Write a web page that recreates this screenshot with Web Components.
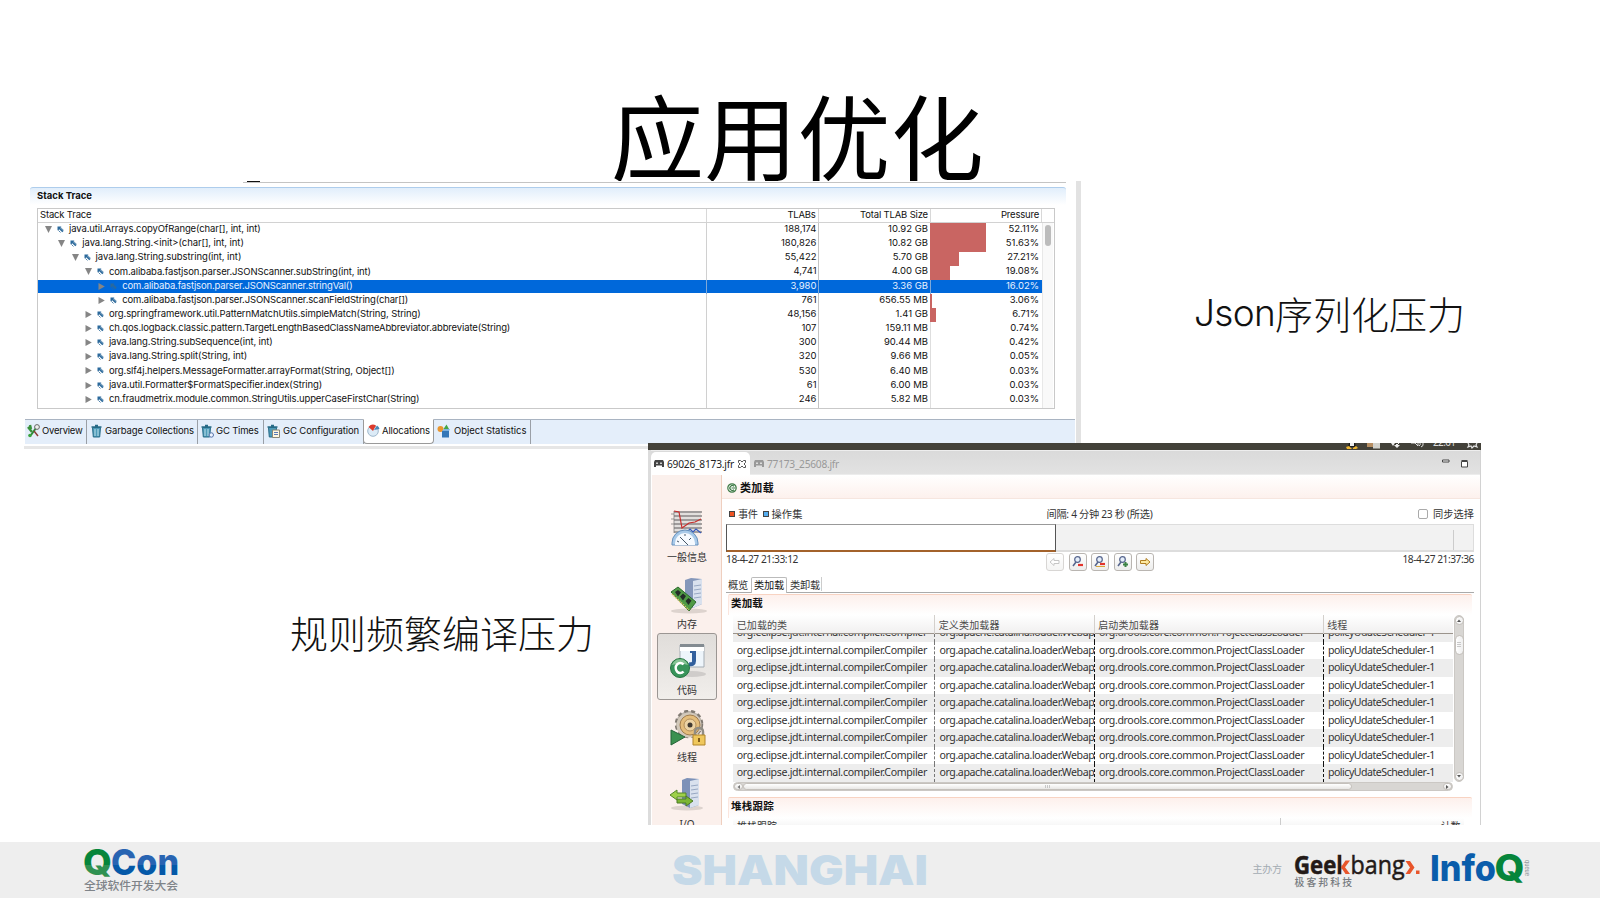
<!DOCTYPE html>
<html lang="zh-CN">
<head>
<meta charset="utf-8">
<title>应用优化</title>
<style>
html,body{margin:0;padding:0;background:#fff}
body{width:1600px;height:900px;overflow:hidden;font-family:"Noto Sans","Noto Sans CJK SC",sans-serif}
</style>
</head>
<body>
<talk-slide></talk-slide>
<script>
const define = (name, html, setup) => {
  const t = document.createElement('template');
  t.innerHTML = html;
  customElements.define(name, class extends HTMLElement {
    constructor() {
      super();
      this.attachShadow({mode: 'open'}).append(t.content.cloneNode(true));
    }
    connectedCallback() { if (setup && !this.ready) { this.ready = true; setup(this, this.shadowRoot); } }
  });
};

/* Text run tracked out or in so that it fills the width given in "w". */
define('fit-text', `<style>
:host{display:inline-block;white-space:pre;flex:none}
span{display:inline-block;white-space:pre}
</style><span><slot></slot></span>`, (el, root) => {
  const w = parseFloat(el.getAttribute('w'));
  const span = root.querySelector('span');
  el.style.width = w + 'px';
  const n = [...el.textContent].length;
  const natural = span.getBoundingClientRect().width;
  if (natural) span.style.letterSpacing = ((w - natural) / n) + 'px';
});

/* ---------- allocation view ---------- */
define('frame-row', `<style>
:host{display:grid;grid-template-columns:669px 111.5px 112.5px 111px;height:14.17px;line-height:12.6px;color:#111}
:host([selected]){color:#e8f1ff}
.tree{display:flex;align-items:center;box-sizing:border-box;padding-bottom:1.4px}
.num{text-align:right;padding-right:2px}
.p{position:relative}
.bar{position:absolute;left:-1px;top:0;bottom:-.4px;background:#c96562}
.p span{position:relative}
.p{padding-right:3px}
:host([selected]) div{background:linear-gradient(#0068da,#0068da) 0 0/100% 13px no-repeat}
:host([selected]) .num{border-left:1px solid #7fa9d8;margin-left:-1px}
svg{flex:none;display:block}
</style>
<div class="tree"><svg id="tw" width="9" height="9" viewBox="0 0 9 9"><path fill="#858585"/></svg>
<svg id="ic" width="7" height="7" viewBox="0 0 7 7" style="margin-left:4px"><path d="M.5.5h3.700v1.200H3l3.500 3.300-1.200 1.300L1.900 3v1.300H.5z" fill="#2b699b"/><path d="M4.200 2.300 6.600 4.200M1.500 4.500l2 2" stroke="#2b699b" stroke-width=".8"/></svg><fit-text id="name"></fit-text></div>
<div class="num" id="a"></div><div class="num" id="b" style="padding-right:3px"></div><div class="num p"><i class="bar"></i><span id="c"></span></div>`, (el, root) => {
  const $ = s => root.querySelector(s), g = k => el.getAttribute(k);
  const depth = +g('depth');
  $('.tree').style.paddingLeft = (6 + depth * 13.3) + 'px';
  $('#tw path').setAttribute('d', g('open') !== null ? 'M1 1h7L4.5 8z' : 'M1.500 1v7L7.800 4.500z');
  $('#name').style.marginLeft = '5px';
  $('#a').textContent = g('tlabs'); $('#b').textContent = g('size');
  $('#c').textContent = g('pressure');
  $('.bar').style.width = g('bar') + 'px';
});

define('alloc-view', `<style>
:host{display:block;width:1057px;height:268px;background:#fff;box-sizing:border-box;border-right:5px solid #e2e2e2;border-bottom:3px solid #e6e6e6;font:9.5px Inter,sans-serif;color:#111}
.prev{height:6px;margin-left:219px;width:823px;box-sizing:border-box;background:linear-gradient(#c4c4c4,#c4c4c4) 0 1px/100% 1px no-repeat}
.prev i{display:block;width:13px;height:1.4px;background:#111;margin-left:4px}
.head{margin-left:6px;width:1036px;height:21px;box-sizing:border-box;border-top:1px solid #aecdec;border-radius:3px 3px 0 0;background:linear-gradient(#e1eefb,#fff 85%);padding:0 0 0 7px;line-height:16px;font-weight:700}
.table{margin-left:13px;width:1018px;height:201px;box-sizing:border-box;border:1px solid #c9c9c9;position:relative}
.cols{display:grid;grid-template-columns:669px 111.5px 112.5px 111px 11px;height:13px;line-height:11.5px;border-bottom:1px solid #d2d2d2}
.cols div{box-sizing:border-box;padding:0 2px;text-align:right;border-right:1px solid #d8d8d8}
.cols div:first-child{text-align:left}.cols div:last-child{border:0}
.body{display:grid;grid-template-columns:1004px 11px;height:185px;background:linear-gradient(#d0d0d0,#d0d0d0) 668px 0/1px 100% no-repeat,linear-gradient(#c4c4c4,#c4c4c4) 779.5px 0/1px 100% no-repeat,linear-gradient(#dedede,#dedede) 892px 0/1px 100% no-repeat}
.sb{background:#f9f9f9;border-left:1px solid #e8e8e8;padding:2px 1.5px}
.sb i{display:block;width:6.5px;height:21px;border-radius:4px;background:#bcbcbc}
.tabs{margin:10px 0 0 1px;height:25px;width:1050px;background:#e4eefa;border-top:1px solid #a9b4c2;box-sizing:border-box;display:flex;line-height:20px}
.tab{box-sizing:border-box;border-right:1px solid #9a9fa6;height:24px;display:flex;align-items:center;padding-left:3px}
.tab fit-text{margin-top:-2px}
.tab svg{width:13px;height:14px;flex:none;margin-right:2px;margin-top:-3px}
.on{background:#fff;border:1px solid #9a9a9a;border-top-color:#fff;border-radius:0 0 4px 4px;margin-left:-1px;margin-top:-1px;height:25px}
</style>
<div class="prev"><i></i></div>
<div class="head"><fit-text w="55">Stack Trace</fit-text></div>
<div class="table"><div class="cols"><div><fit-text w="51.5">Stack Trace</fit-text></div><div><fit-text w="28">TLABs</fit-text></div><div><fit-text w="68">Total TLAB Size</fit-text></div><div><fit-text w="38">Pressure</fit-text></div><div></div></div>
<div class="body"><div id="rows"></div><div class="sb"><i></i></div></div></div>
<div class="tabs">
<div class="tab" style="width:62px;padding-left:2px"><svg viewBox="0 0 13 14"><path d="M1 3 5 8M3 1l1 4" stroke="#39913c" stroke-width="2.4"/><path d="M4 11 9 4" stroke="#2f8b39" stroke-width="2"/><circle cx="10" cy="3" r="2.4" fill="#eee" stroke="#666"/><path d="m7 7 4 5" stroke="#8b3d37" stroke-width="1.5"/><circle cx="3" cy="11.5" r="1.8" fill="#3aa43f"/></svg><fit-text w="40.5">Overview</fit-text></div>
<div class="tab" style="width:111px"><svg viewBox="0 0 13 14"><path d="M2.5 3.5h8l-.8 9.5H3.3z" fill="#4d9ab8" stroke="#276b87"/><path d="M1.5 3h10M5 1.5h3" stroke="#276b87" stroke-width="1.6"/><path d="M5 5v7M8 5v7" stroke="#bfe2ec"/></svg><fit-text w="89">Garbage Collections</fit-text></div>
<div class="tab" style="width:66px"><svg viewBox="0 0 13 14"><path d="M1.5 3.5h8l-.8 9.5H2.3z" fill="#4d9ab8" stroke="#276b87"/><path d="M.5 3h10M4 1.5h3" stroke="#276b87" stroke-width="1.6"/><path d="M4 5v7M7 5v7" stroke="#bfe2ec"/><circle cx="10.3" cy="11" r="2.2" fill="#eef5ff" stroke="#5572a8"/></svg><fit-text w="42.5">GC Times</fit-text></div>
<div class="tab" style="width:100px"><svg viewBox="0 0 13 14" style="margin-right:3px"><path d="M1.5 3.5h8l-.8 9.5H2.3z" fill="#4d9ab8" stroke="#276b87"/><path d="M.5 3h10M4 1.5h3" stroke="#276b87" stroke-width="1.6"/><path d="M5.500 6h7v7.500h-7z" fill="#fff7df" stroke="#8a8777"/><path d="M7 8.500h4M7 10.500h4" stroke="#5a79b5"/></svg><fit-text w="76">GC Configuration</fit-text></div>
<div class="tab on" style="width:71px"><svg viewBox="0 0 13 14" style="margin-right:2px"><circle cx="6" cy="8" r="5.300" fill="#dcebf7" stroke="#9fb8cc"/><path d="M6 8 1.500 4A6 6 0 0 1 9 2.500z" fill="#dc3a2c"/><path d="m7 7 3-4.500A5 5 0 0 1 12.500 6z" fill="#4a87b5"/></svg><fit-text w="48">Allocations</fit-text></div>
<div class="tab" style="width:97px"><svg viewBox="0 0 13 14" style="margin-right:4px"><circle cx="3.500" cy="5" r="3" fill="#e9962f"/><path d="M5 7h7v6.500H5z" fill="#3477b8"/><path d="M5 7l2-2h6l-1 2z" fill="#7fb2df"/><path d="m6.500 5 3-4.500L12 5z" fill="#44a546"/></svg><fit-text w="72.500">Object Statistics</fit-text></div>
</div>`, (el, root) => {
  const data = [
    [0,1,'java.util.Arrays.copyOfRange(char[], int, int)',191.5,'188,174','10.92 GB','52.11%',56],
    [1,1,'java.lang.String.<init>(char[], int, int)',161.5,'180,826','10.82 GB','51.63%',56],
    [2,1,'java.lang.String.substring(int, int)',145.7,'55,422','5.70 GB','27.21%',29],
    [3,1,'com.alibaba.fastjson.parser.JSONScanner.subString(int, int)',262,'4,741','4.00 GB','19.08%',20],
    [4,0,'com.alibaba.fastjson.parser.JSONScanner.stringVal()',230.3,'3,980','3.36 GB','16.02%',0],
    [4,0,'com.alibaba.fastjson.parser.JSONScanner.scanFieldString(char[])',286,'761','656.55 MB','3.06%',2],
    [3,0,'org.springframework.util.PatternMatchUtils.simpleMatch(String, String)',311.7,'48,156','1.41 GB','6.71%',6],
    [3,0,'ch.qos.logback.classic.pattern.TargetLengthBasedClassNameAbbreviator.abbreviate(String)',401.3,'107','159.11 MB','0.74%',0],
    [3,0,'java.lang.String.subSequence(int, int)',163.7,'300','90.44 MB','0.42%',0],
    [3,0,'java.lang.String.split(String, int)',138.3,'320','9.66 MB','0.05%',0],
    [3,0,'org.slf4j.helpers.MessageFormatter.arrayFormat(String, Object[])',285.7,'530','6.40 MB','0.03%',0],
    [3,0,'java.util.Formatter$FormatSpecifier.index(String)',213.3,'61','6.00 MB','0.03%',0],
    [3,0,'cn.fraudmetrix.module.common.StringUtils.upperCaseFirstChar(String)',310.5,'246','5.82 MB','0.03%',0]];
  const host = root.querySelector('#rows');
  data.forEach((d, i) => {
    const r = document.createElement('frame-row');
    r.setAttribute('depth', d[0]); if (d[1]) r.setAttribute('open', '');
    if (i === 4) r.setAttribute('selected', '');
    ['tlabs','size','pressure','bar'].forEach((k, j) => r.setAttribute(k, d[4 + j]));
    const n = r.shadowRoot.querySelector('#name');
    n.textContent = d[2]; n.setAttribute('w', d[3]);
    host.append(r);
  });
});

/* ---------- flight recorder window ---------- */
define('nav-item', `<style>
:host{display:flex;flex-direction:column;align-items:center;box-sizing:border-box;width:60px;height:66.7px;margin-left:5px;padding-top:9px;font-size:10px;line-height:12px;color:#333;border:1px solid transparent;border-radius:3px;flex:none}
:host([on]){border-color:#9b9693;background:linear-gradient(#e0ddda,#f1eeeb)}
::slotted(svg){display:block;width:40px;height:38px}
.l{margin-top:3px}
</style><slot name="icon"></slot><div class="l"><slot></slot></div>`);

define('tool-button', `<style>
:host{display:block;width:18px;height:18px;box-sizing:border-box;border:1px solid #b9b5b1;border-radius:3px;background:linear-gradient(#fff,#ededec)}
:host([off]){opacity:.55}
::slotted(svg){display:block;width:16px;height:16px}
</style><slot></slot>`);

define('class-table', `<style>
:host{display:grid;grid-template-columns:720px 11px;grid-template-rows:167px 10px;margin-left:7px;column-gap:1px;font-size:10.6px;color:#333}
.main{overflow:hidden;position:relative}
.r{display:grid;grid-template-columns:202px 159.5px 229px 129.5px;height:17.57px;line-height:17px}
.r>div{box-sizing:border-box;padding-left:3.7px;overflow:hidden;white-space:pre;border-right:1px dashed #777}
.r>div:nth-child(2),.r>div:nth-child(3){border-right-color:#111}
.r>div:nth-child(n+2){padding-left:4.4px}
.r>div:last-child{border:0}
.r:nth-child(odd){background:#ededed}
.h{display:grid;grid-template-columns:202px 159.5px 229px 129.5px;height:18px;line-height:20px;font-size:10px;background:linear-gradient(#fff,#f1f0f0);border-bottom:1px solid #9b948c;color:#4a4a4a}
.h>div{box-sizing:border-box;padding-left:3.7px;border-right:1px solid #d4d0cc}.h>div:last-child{border:0}
.clip{height:148px;overflow:hidden;display:flex;flex-direction:column;justify-content:flex-end}
.clip .r{flex:none}
.v{display:flex;flex-direction:column;background:#d8d6d3;border:1px solid #cbc8c4;border-radius:5px;box-sizing:border-box;width:10px;align-items:center}
.v i,.hs i{background:linear-gradient(90deg,#fff,#eee);border:1px solid #c4c0bb;box-sizing:border-box;border-radius:5px;display:flex;align-items:center;justify-content:center}
.hs{display:flex;border-radius:5px;background:#d8d6d3;border:1px solid #cbc8c4;box-sizing:border-box;height:9px}
.hs i{background:linear-gradient(#fff,#e8e7e5);height:7px}
svg{display:block}
</style>
<div class="main"><div class="h"><div><fit-text w="50.5">已加载的类</fit-text></div><div><fit-text w="61">定义类加载器</fit-text></div><div><fit-text w="61">启动类加载器</fit-text></div><div><fit-text w="20">线程</fit-text></div></div><div class="clip"></div></div>
<div class="v"><i style="width:9px;height:9px"><svg width="4" height="3"><path d="M0 3 2 .5 4 3z" fill="#555"/></svg></i><i style="width:9px;height:20px;margin-top:10px"><svg width="4" height="6"><path d="M0 .5h4M0 2.500h4M0 4.500h4" stroke="#bbb" stroke-width=".8"/></svg></i><i style="width:9px;height:9px;margin-top:auto"><svg width="4" height="3"><path d="M0 0h4L2 2.500z" fill="#555"/></svg></i></div>
<div class="hs"><i style="width:9px"><svg width="3" height="4"><path d="M3 0v4L.5 2z" fill="#777"/></svg></i><i style="width:609px"><svg width="6" height="3"><path d="M.5 0v3M2.500 0v3M4.500 0v3" stroke="#bbb" stroke-width=".8"/></svg></i><i style="width:9px;margin-left:auto"><svg width="3" height="4"><path d="M0 0v4L2.500 2z" fill="#555"/></svg></i></div>`, (el, root) => {
  const c = root.querySelector('.clip');
  const row = '<div><fit-text w="190.3">org.eclipse.jdt.internal.compiler.Compiler</fit-text></div><div><fit-text w="155">org.apache.catalina.loader.Webap</fit-text></div><div><fit-text w="205.3">org.drools.core.common.ProjectClassLoader</fit-text></div><div><fit-text w="107">policyUdateScheduler-1</fit-text></div>';
  c.innerHTML = Array(9).fill('<div class="r">' + row + '</div>').join('');
});

define('recorder-window', `<style>
:host{display:block;width:833px;height:382px;overflow:hidden;background:#fff;color:#333;font:10.2px "Noto Sans","Noto Sans CJK SC",sans-serif}
svg{display:block;flex:none}
.top{height:7px;background:#434139;display:flex;justify-content:flex-end;overflow:hidden;color:#ddd}
.win{height:375px;border-left:3px solid #dcdcdc;border-right:1px solid #d2d2d2;box-sizing:border-box}
.tabs{height:25px;box-sizing:border-box;padding-top:1px;background:linear-gradient(#dadada,#e2e2e2);border-top:1px solid #eee;border-bottom:1px solid #ececec;display:flex;line-height:24px}
.t1{width:99px;height:25px;background:#fff;border-radius:5px 5px 0 0;display:flex;align-items:center;color:#222}
.t1>*{position:relative;top:-1px}
.t2{color:#999;display:flex;align-items:center;margin-left:4px;padding-top:1px}
.main{display:grid;grid-template-columns:70px 1fr;height:350px}
.nav{background:#fbf0ec;border-right:1px solid #efcfbf;box-sizing:border-box;overflow:hidden;padding-top:25px;margin-left:1px;width:70px}
.head{height:24px;border-bottom:1px solid #f6e6df;background:linear-gradient(#fff,#fdf1ed);display:flex;align-items:center;padding-left:6px;font-weight:700;color:#111;box-sizing:border-box;margin-left:1px}
.page{padding:0 6px 0 5px}
.legend{display:flex;align-items:center;height:21px;margin-top:4px;line-height:20px;width:748px}
.sq{width:6px;height:6px;box-sizing:border-box;border:1px solid #444}
.range{box-sizing:border-box;height:28px;background:#f2f2f2;border:1px solid #ddd;border-bottom-width:2px;width:748px;display:flex}
.sel{width:330px;height:28px;margin:-1px 0 0 -1px;box-sizing:border-box;background:#fff;border:1px solid #555;border-top-color:#999;border-bottom:2px solid #a3622b}
.mk{margin:5px 19px 0 auto;width:1px;background:#ccc}
.times{display:flex;justify-content:space-between;width:748px;height:25px;line-height:15px}
.btns{display:flex;gap:4.400px;padding-top:1px}
.sub{display:flex;width:748px;height:16px;border-bottom:1px solid #aaa;line-height:16px;margin-top:0;box-sizing:border-box}
.sec{margin:1px 0 0 2px;width:744px;border-top:1px solid #f8d3c2;border-left:1px solid #fbe6de;box-sizing:border-box;border-radius:2px 2px 0 0;background:linear-gradient(#fdf0ec,#fff);height:21px;font-weight:700;color:#111;padding-left:2px;line-height:17px}
.h2{margin-left:7px;width:731px;display:flex;height:9px;background:linear-gradient(#fff,#f5f5f5);font-size:10px;line-height:17px;box-sizing:border-box;overflow:hidden}
.cb{width:10px;height:10px;box-sizing:border-box;border:1px solid #aaa;border-radius:2px;margin-left:auto;margin-right:5px}
</style>
<div class="top"><svg width="135" height="7" viewBox="0 0 135 7"><path d="M3 0h6l1 4H2z" fill="#1c1c1c"/><path d="M4 0h4v3H4z" fill="#eee"/><path d="m0 4 3-1 3 3H1zM7 5l3-2 2 2-2 1H7z" fill="#efb62f"/><path d="M21 0h8v4h-8z" fill="#b58d62"/><path d="M27 0h7v5.500h-7z" fill="#d2d2cd"/><path d="M45 0h4l-2 3zM50 1h3v-1h-1v2h2l-3 3-3-3h2z" fill="#eee"/><path d="M65 0h4l3 3V0M74 0q1 2-1 3M77 0q1 3-2 4" stroke="#ddd" fill="none"/><path d="M122 0l1 2-1 2 3-1 1 2 2-2 3 1-1-2 1-2" stroke="#e5e5e5" stroke-width="1.200" fill="none"/><text x="87" y="2.500" font-size="10" textLength="23" fill="#ddd">22:01</text></svg></div>
<div class="win">
<div class="tabs"><div class="t1"><svg width="10" height="7" viewBox="0 0 10 7" style="margin:0 3px 0 3px"><path d="M0 7V2l1-2h8l1 2v5H8V5.500H2V7z" fill="#444"/><path d="M2 2.500h2v1.500H2zM6 2.500h2v1.500H6z" fill="#ccc"/></svg><fit-text w="67">69026_8173.jfr</fit-text><svg width="8" height="8" viewBox="0 0 8 8" style="margin-left:4px"><path d="M.500.500h2L4 2 5.500.500h2v2L6 4l1.500 1.500v2h-2L4 6 2.500 7.500h-2v-2L2 4 .500 2.500z" fill="#fff" stroke="#555"/></svg></div>
<div class="t2"><svg width="10" height="7" viewBox="0 0 10 7" style="margin-right:3px"><path d="M0 7V2l1-2h8l1 2v5H8V5.500H2V7z" fill="#999"/><path d="M2 2.500h2v1.500H2zM6 2.500h2v1.500H6z" fill="#ddd"/></svg><fit-text w="72">77173_25608.jfr</fit-text></div>
<svg width="27" height="9" viewBox="0 0 27 9" style="margin:7px 11px 0 auto"><path d="M.500 1h6.500v2H.500zM19.500 2.500h6v5.500h-6zM19.500 1.500h6" fill="#fff" stroke="#444"/></svg></div>
<div class="main"><div class="nav">
<nav-item><svg slot="icon" viewBox="0 0 40 38"><path d="M7 1h27v20H7z" fill="#e2dfdd"/><path d="M7 2h28M7 6h28M7 10h28M7 14h28M7 18h28M7 22h28" stroke="#8b8786" stroke-width="1.400"/><path d="M7 1v22M4 4h3M4 9h3M4 14h3" stroke="#777" stroke-width=".7"/><path d="m7 1 5 1 3 16 7-5 6-1 6-3" fill="none" stroke="#c82c2a" stroke-width="1.200"/><path d="m18 24 5-5 3 3 3-3 5 4" fill="none" stroke="#3558bd" stroke-width="1.200"/><path d="M5 33a13 13 0 0 1 26 0v2H5z" fill="#a9cae9" stroke="#6691bd"/><path d="M8 33a10 10 0 0 1 20 0v2H8z" fill="#f6faff"/><path d="m13 27 8 8M18 24v2M10 31l2 1M24 28l-2 2" stroke="#456"/></svg>一般信息</nav-item>
<nav-item><svg slot="icon" viewBox="0 0 40 38"><ellipse cx="22" cy="34" rx="18" ry="2.500" fill="#ddd3ce"/><path d="m18 3 6-2 11 1v25l-9 4-8-5z" fill="#8597ba"/><path d="m26 4 9-2v25l-9 4z" fill="#d9e1ee"/><path d="M27 9l7-1M27 13l7-1M27 17l7-1M27 21l7-1" stroke="#98a8c3"/><path d="m4 15 7-5 18 15-7 9z" fill="#4f9a45" stroke="#2c6a2d"/><path d="m8 15 3-2 3 2.500-3 4zM13 19.500l3-3 3 2.500-3 4.500zM18.500 24l3-3 3 2.500-3 4.500z" fill="#242c28"/><path d="m5 17 17 16" stroke="#d3c763" stroke-width="1.500" stroke-dasharray="1.500 1"/></svg>内存</nav-item>
<nav-item on><svg slot="icon" viewBox="0 0 40 38"><ellipse cx="25" cy="31" rx="14" ry="3" fill="#cfccca"/><path d="M13 2h24v22H13z" fill="#eef5fb" stroke="#a5adb5"/><path d="M13 1h24v3H13z" fill="#838b91"/><path d="M13 4h24v4H13z" fill="#fff"/><path d="M27 9v9q0 4-5 3" fill="none" stroke="#315f9d" stroke-width="4"/><path d="M23 9h6" stroke="#315f9d" stroke-width="2"/><circle cx="13" cy="25" r="9.500" fill="#38945a" stroke="#267541"/><path d="M5 22a8.500 8.500 0 0 1 16 0q-8-3-16 0" fill="#86c394"/><path d="M16.500 21.500a4.500 5 0 1 0 0 7" fill="none" stroke="#fff" stroke-width="2.600"/></svg>代码</nav-item>
<nav-item><svg slot="icon" viewBox="0 0 40 38"><circle cx="22" cy="14" r="13" fill="#bcb5ac" stroke="#827b73" stroke-width="2.500" stroke-dasharray="4 3"/><circle cx="22" cy="15" r="12.500" fill="#d2c8ba"/><circle cx="23" cy="15" r="10" fill="#e4bd7c" stroke="#a17d4c"/><circle cx="23" cy="15" r="6" fill="#ecd3a5" stroke="#b4905c"/><circle cx="23" cy="15" r="2.500" fill="#413a32"/><path d="m4 20 14 7-14 8z" fill="#3b9150" stroke="#246338"/><path d="M28 26v-4q0-4 4-4t4 4v4" fill="none" stroke="#918d84" stroke-width="2.500"/><path d="M26 25h12v10H26z" fill="#efc75c" stroke="#b1852b"/><path d="M32 28v4" stroke="#815d1c" stroke-width="2"/></svg>线程</nav-item>
<nav-item><svg slot="icon" viewBox="0 0 40 38"><ellipse cx="20" cy="31" rx="16" ry="2.500" fill="#ddd3ce"/><path d="m15 3 5-2 12 1v26l-9 3-8-4z" fill="#7d91b8"/><path d="m23 4 9-2v26l-9 3z" fill="#d9e1ee"/><path d="M24 9l7-1M24 13l7-1M24 17l7-1M24 21l7-1" stroke="#98a8c3"/><path d="m3 18 7-5v3h9v4h-9v3z" fill="#9ed048" stroke="#55852a"/><path d="m26 24-7-5v3h-9v4h9v3z" fill="#7bb632" stroke="#4c7a26"/></svg>I/O</nav-item>
</div>
<div><div class="head"><svg width="10" height="10" viewBox="0 0 10 10" style="margin:3px 3px 0 -1px"><circle cx="5" cy="5" r="4.200" fill="#fff" stroke="#3d7a45" stroke-width="1.200"/><path d="M7 3.300a2.400 2.400 0 1 0 0 3.400M4.500 5h4" stroke="#3d7a45" fill="none" stroke-width="1.200"/></svg><fit-text w="34" style="font-size:11px">类加载</fit-text></div>
<div class="page">
<div class="legend"><i class="sq" style="background:#ef5423;margin-left:3px"></i><fit-text w="19.500" style="margin-left:3px">事件</fit-text><i class="sq" style="background:#55aef0;margin-left:5px"></i><fit-text w="31" style="margin-left:3px">操作集</fit-text><fit-text w="106" style="margin-left:244px">间隔: 4 分钟 23 秒 (所选)</fit-text><i class="cb"></i><fit-text w="41">同步选择</fit-text></div>
<div class="range"><div class="sel"></div><div class="mk"></div></div>
<div class="times"><fit-text w="72">18-4-27 21:33:12</fit-text><div class="btns">
<tool-button off><svg viewBox="0 0 16 16"><path d="m3 8 4-3.500v2h5v3H7v2z" fill="#fff" stroke="#999"/></svg></tool-button>
<tool-button><svg viewBox="0 0 16 16"><circle cx="7.500" cy="5.500" r="2.800" fill="#e5eefa" stroke="#56658d" stroke-width="1.200"/><path d="M6 8 3 12" stroke="#56658d" stroke-width="1.600"/><path d="M8 11h5" stroke="#e3342c" stroke-width="2.200"/></svg></tool-button>
<tool-button><svg viewBox="0 0 16 16"><circle cx="7.500" cy="5.500" r="2.800" fill="#e5eefa" stroke="#56658d" stroke-width="1.200"/><path d="M6 8 3 12" stroke="#56658d" stroke-width="1.600"/><path d="M8 10h5" stroke="#e3342c" stroke-width="2.200"/><path d="M4 12.500h9" stroke="#d6a53b"/></svg></tool-button>
<tool-button><svg viewBox="0 0 16 16"><circle cx="7.500" cy="5.500" r="2.800" fill="#e5eefa" stroke="#56658d" stroke-width="1.200"/><path d="M6 8 3 12" stroke="#56658d" stroke-width="1.600"/><path d="M8 10.500h5M10.500 8v5" stroke="#3c8245" stroke-width="2"/></svg></tool-button>
<tool-button><svg viewBox="0 0 16 16"><path d="m13 8-4-3.500v2H3.500v3H9v2z" fill="#fde9a0" stroke="#b07e22"/></svg></tool-button>
</div><fit-text w="71.500">18-4-27 21:37:36</fit-text></div>
<div class="sub"><fit-text w="20" style="margin:0 3px 0 2px">概览</fit-text><div style="border:1px solid #bbb;border-bottom:0;border-radius:2px 2px 0 0;padding:0 2px;height:15px;line-height:15px;background:#fff;color:#111"><fit-text w="30">类加载</fit-text></div><div style="border-right:1px solid #ccc;padding:0 1px 0 3px;height:14px"><fit-text w="30">类卸载</fit-text></div></div>
<div class="sec"><fit-text w="32" style="font-size:10.500px">类加载</fit-text></div>
<class-table></class-table>
<div class="sec" style="margin-top:5px"><fit-text w="43" style="font-size:10.500px">堆栈跟踪</fit-text></div>
<div class="h2"><fit-text w="40" style="margin-left:4px">堆栈跟踪</fit-text><div style="border-left:1px solid #ccc;margin-left:503px"></div><fit-text w="19" style="margin-left:160px">计数</fit-text></div>
</div></div></div></div>`);

/* ---------- sponsor strip ---------- */
define('slide-footer', `<style>
:host{display:flex;height:56px;background:#eee;width:1600px}
svg{display:block}
text{font-family:Inter,"Noto Sans CJK SC",sans-serif}
.gb text{font-family:"Open Sans",sans-serif}
</style>
<svg width="1600" height="56" viewBox="0 0 1600 56">
<defs><linearGradient id="g" x2="0" y2="1"><stop offset=".55" stop-color="#06853b"/><stop offset=".55" stop-color="#2f9151"/></linearGradient>
<linearGradient id="b" x2="0" y2="1"><stop offset=".55" stop-color="#2864b2"/><stop offset=".55" stop-color="#0559a8"/></linearGradient></defs>
<text x="83" y="33" font-size="35.500" font-weight="800" fill="url(#g)" textLength="29" lengthAdjust="spacingAndGlyphs">Q</text>
<text x="111" y="33" font-size="35.500" font-weight="800" fill="url(#b)" textLength="68" lengthAdjust="spacingAndGlyphs">Con</text>
<text x="84" y="48" font-size="11.800" font-weight="500" fill="#7f8489" textLength="94">全球软件开发大会</text>
<text x="672" y="42.500" font-size="41" font-weight="900" fill="#c5d9e8" textLength="256" lengthAdjust="spacingAndGlyphs">SHANGHAI</text>
<text x="1252.500" y="31" font-size="10" fill="#a3abb2" textLength="29.500">主办方</text>
<g class="gb"><text x="1294" y="31.500" font-size="24.500" font-weight="700" fill="#231a18" stroke="#231a18" stroke-width=".5" textLength="56" lengthAdjust="spacingAndGlyphs">Geek</text>
<path d="M1341.500 10h11v24h-11z" fill="#eee"/>
<text x="1350.500" y="31.500" font-size="25" fill="#231a18" stroke="#231a18" stroke-width=".5" textLength="54" lengthAdjust="spacingAndGlyphs">bang</text></g>
<path d="m1350 18.500-5 6.700 5 6.800h-4.500l-4.500-6.800 4.500-6.700zM1405.500 19h4.500l4.500 6.500-4.500 6.500h-4.500l4.500-6.500zM1416 28.500h3.500V32h-3.500z" fill="#e8552b"/>
<text x="1294.500" y="43.500" font-size="9.800" font-weight="500" fill="#777b80" textLength="57.500">极客邦科技</text>
<text x="1430" y="39" font-size="36" font-weight="800" fill="#0a5dab" textLength="66" lengthAdjust="spacingAndGlyphs">Info</text>
<text x="1494.500" y="39" font-size="37" font-weight="800" fill="#06853b" textLength="30" lengthAdjust="spacingAndGlyphs">Q</text>
<text transform="translate(1524.500 18) rotate(90)" font-size="5.500" fill="#8a9095" textLength="16">queue</text>
</svg>`);

/* ---------- slide canvas: pictures overlap freely ---------- */
define('talk-slide', `<style>
:host{display:block;position:relative;width:1600px;height:900px;background:#fff;overflow:hidden}
:host>*{position:absolute}
h1{margin:0;left:611px;top:64px;font:400 93px/140px "Noto Sans CJK SC",sans-serif;color:#000;white-space:nowrap}
p{margin:0;font:300 38px/56px "Noto Sans CJK SC",sans-serif;color:#111;white-space:nowrap;display:flex}
</style>
<h1><fit-text w="373">应用优化</fit-text></h1>
<alloc-view style="left:24px;top:181px"></alloc-view>
<recorder-window style="left:648px;top:443px"></recorder-window>
<p style="left:1194px;top:285px"><fit-text w="81" style="font:300 37px/56px Inter,sans-serif">Json</fit-text><span>序列化压力</span></p>
<p style="left:290px;top:604px"><span>规则频繁编译压力</span></p>
<slide-footer style="left:0;top:842px"></slide-footer>`);
</script>
</body>
</html>
